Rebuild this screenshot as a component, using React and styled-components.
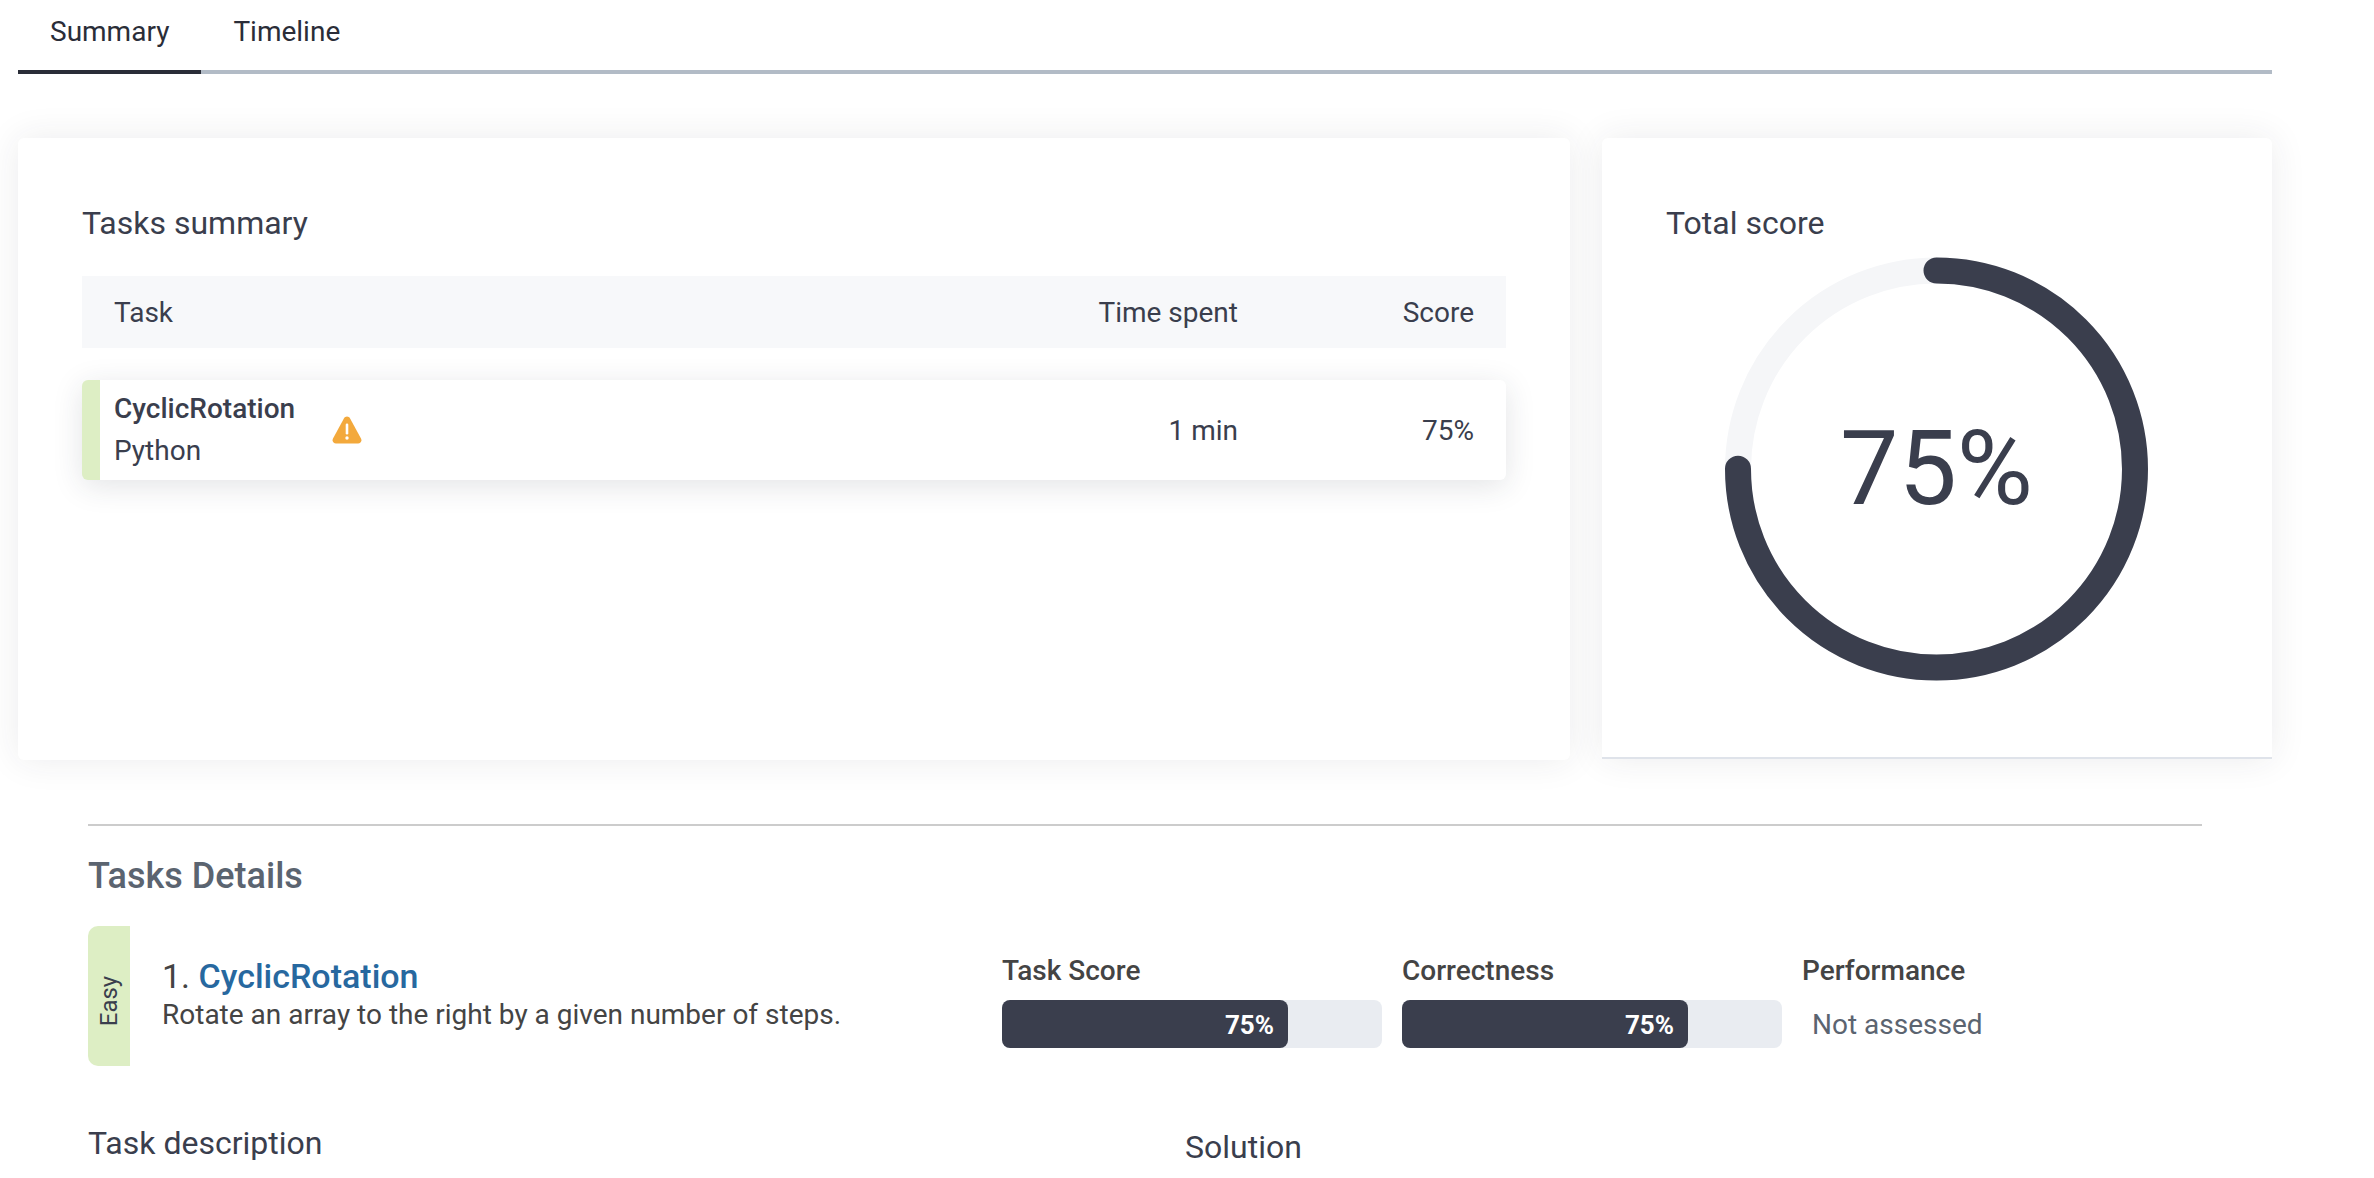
import React, { useState } from 'react';
import styled, { createGlobalStyle } from 'styled-components';

const GlobalStyle = createGlobalStyle`
  html, body {
    margin: 0;
    background: #ffffff;
    overflow: hidden;
  }
  body {
    font-family: Roboto, "Liberation Sans", sans-serif;
    color: #3a3e4d;
  }
`;

const tabs = ['Summary', 'Timeline'];

const bars = [
  { label: 'Task Score', value: 75 },
  { label: 'Correctness', value: 75 },
];

function WarningIcon() {
  return (
    <WarningSvg viewBox="0 0 30 28" aria-hidden="true">
      <path
        d="M15 .5c1.3 0 2.4.7 3.1 1.9l10.9 20.2c1.2 2.3-.4 4.9-3 4.9H4c-2.6 0-4.2-2.6-3-4.9L11.9 2.4C12.6 1.2 13.7.5 15 .5z"
        fill="#f3a93c"
      />
      <rect x="13.7" y="7.5" width="2.6" height="11" rx="1.3" fill="#ffffff" />
      <circle cx="15" cy="22" r="1.7" fill="#ffffff" />
    </WarningSvg>
  );
}

function ScoreRing({ value }) {
  const radius = 198.5;
  const circumference = 2 * Math.PI * radius;
  return (
    <RingBox>
      <svg width="423" height="424" viewBox="0 0 423 424" aria-hidden="true">
        <circle cx="211.5" cy="212" r={radius} fill="none" stroke="#f5f6f8" strokeWidth="26" />
        <circle
          cx="211.5"
          cy="212"
          r={radius}
          fill="none"
          stroke="#3a3e4d"
          strokeWidth="26"
          strokeLinecap="round"
          strokeDasharray={`${(circumference * value) / 100} ${circumference}`}
          transform="rotate(-90 211.5 212)"
        />
      </svg>
      <RingLabel>{value}%</RingLabel>
    </RingBox>
  );
}

export default function App() {
  const [activeTab, setActiveTab] = useState(tabs[0]);

  return (
    <Page>
      <GlobalStyle />
      <TabBar>
        {tabs.map((tab) => (
          <Tab key={tab} $active={tab === activeTab} onClick={() => setActiveTab(tab)}>
            {tab}
          </Tab>
        ))}
      </TabBar>

      <Cards>
        <SummaryCard>
          <CardTitle>Tasks summary</CardTitle>
          <TableHead>
            <span>Task</span>
            <TimeCell>Time spent</TimeCell>
            <ScoreCell>Score</ScoreCell>
          </TableHead>
          <TableRow>
            <TaskCell>
              <TaskText>
                <TaskName>CyclicRotation</TaskName>
                <span>Python</span>
              </TaskText>
              <WarningIcon />
            </TaskCell>
            <TimeCell>1 min</TimeCell>
            <ScoreCell>75%</ScoreCell>
          </TableRow>
        </SummaryCard>
        <TotalCard>
          <CardTitle>Total score</CardTitle>
          <ScoreRing value={75} />
        </TotalCard>
      </Cards>

      <Details>
        <Divider />
        <DetailsTitle>Tasks Details</DetailsTitle>
        <TaskHeader>
          <Difficulty>
            <DifficultyLabel>Easy</DifficultyLabel>
          </Difficulty>
          <TaskIntro>
            <TaskHeading>
              1. <TaskLink>CyclicRotation</TaskLink>
            </TaskHeading>
            <TaskSummary>Rotate an array to the right by a given number of steps.</TaskSummary>
          </TaskIntro>
          <Metrics>
            {bars.map((bar) => (
              <Metric key={bar.label}>
                <MetricLabel>{bar.label}</MetricLabel>
                <BarTrack>
                  <BarFill style={{ width: `calc(${bar.value}% + 1px)` }}>{bar.value}%</BarFill>
                </BarTrack>
              </Metric>
            ))}
            <Metric>
              <MetricLabel>Performance</MetricLabel>
              <NotAssessed>Not assessed</NotAssessed>
            </Metric>
          </Metrics>
        </TaskHeader>
        <Columns>
          <SectionTitle>Task description</SectionTitle>
          <SolutionTitle>Solution</SolutionTitle>
        </Columns>
      </Details>
    </Page>
  );
}

const Page = styled.div`
  width: 2254px;
  margin-left: 18px;
`;

const TabBar = styled.div`
  display: flex;
  height: 74px;
  box-sizing: border-box;
  border-bottom: 4px solid #b2bbc6;
`;

const Tab = styled.div`
  height: 74px;
  box-sizing: border-box;
  padding: 12px 32px 0;
  font-size: 28px;
  line-height: 40px;
  color: #2a2d38;
  cursor: pointer;
  border-bottom: 4px solid ${(props) => (props.$active ? '#2a2d38' : 'transparent')};
`;

const Cards = styled.div`
  display: grid;
  grid-template-columns: 1552px 670px;
  column-gap: 32px;
  margin-top: 64px;
`;

const Card = styled.section`
  height: 622px;
  box-sizing: border-box;
  padding: 64px;
  background: #ffffff;
  border-radius: 6px;
  box-shadow: 0 0 36px rgba(40, 44, 60, 0.09);
`;

const SummaryCard = styled(Card)``;

const TotalCard = styled(Card)`
  position: relative;
  height: 621px;
  border-bottom: 2px solid #dfe3ea;
  border-radius: 6px 6px 0 0;
`;

const CardTitle = styled.h2`
  margin: 0;
  padding-top: 1px;
  font-size: 32px;
  font-weight: 400;
  line-height: 40px;
  color: #3a3e4d;
`;

const rowColumns = `
  display: grid;
  grid-template-columns: 1fr 300px 236px;
  align-items: center;
  box-sizing: border-box;
  font-size: 28px;
  color: #3a3e4d;
`;

const TableHead = styled.div`
  ${rowColumns}
  height: 72px;
  margin-top: 33px;
  padding: 1px 32px 0;
  background: #f7f8fa;
`;

const TableRow = styled.div`
  ${rowColumns}
  height: 100px;
  margin-top: 32px;
  padding: 0 32px 0 14px;
  background: #ffffff;
  border-left: 18px solid #ddeec4;
  border-radius: 6px;
  box-shadow: 0 6px 30px rgba(40, 44, 60, 0.13);
`;

const TimeCell = styled.span`
  text-align: right;
`;

const ScoreCell = styled.span`
  text-align: right;
`;

const TaskCell = styled.div`
  display: flex;
  align-items: center;
  gap: 37px;
`;

const TaskText = styled.div`
  display: flex;
  flex-direction: column;
  line-height: 42px;
`;

const TaskName = styled.span`
  font-weight: 500;
`;

const WarningSvg = styled.svg`
  width: 30px;
  height: 28px;
  flex: none;
`;

const RingBox = styled.div`
  position: absolute;
  left: 123px;
  top: 119px;
  width: 423px;
  height: 424px;
`;

const RingLabel = styled.div`
  position: absolute;
  inset: 0;
  display: flex;
  align-items: center;
  justify-content: center;
  padding-bottom: 2px;
  box-sizing: border-box;
  font-size: 104px;
  font-weight: 400;
  color: #3a3e4d;
`;

const Details = styled.div`
  margin: 0 70px;
  padding-top: 64px;
`;

const Divider = styled.div`
  height: 2px;
  background: #cccccc;
`;

const DetailsTitle = styled.h2`
  margin: 28px 0 0;
  font-size: 36px;
  font-weight: 500;
  line-height: 44px;
  color: #5b6470;
`;

const TaskHeader = styled.div`
  display: flex;
  align-items: stretch;
  height: 140px;
  margin-top: 28px;
`;

const Difficulty = styled.div`
  display: flex;
  align-items: center;
  justify-content: center;
  width: 42px;
  background: #ddeec4;
  border-radius: 10px 0 0 10px;
`;

const DifficultyLabel = styled.span`
  transform: translateY(5px) rotate(-90deg);
  transform-origin: center;
  font-size: 24px;
  color: #3a3e4d;
`;

const TaskIntro = styled.div`
  width: 840px;
  margin-left: 32px;
  padding-top: 29px;
`;

const TaskHeading = styled.div`
  font-size: 34px;
  line-height: 42px;
  color: #444444;
`;

const TaskLink = styled.a`
  font-weight: 500;
  color: #27689f;
`;

const TaskSummary = styled.div`
  margin-top: 1px;
  font-size: 28px;
  line-height: 34px;
  color: #444444;
`;

const Metrics = styled.div`
  display: flex;
  gap: 20px;
  padding-top: 28px;
`;

const Metric = styled.div`
  width: 380px;
`;

const MetricLabel = styled.div`
  font-size: 28px;
  font-weight: 500;
  line-height: 34px;
  color: #444444;
`;

const BarTrack = styled.div`
  height: 48px;
  margin-top: 12px;
  background: #e9ecf1;
  border-radius: 8px;
`;

const BarFill = styled.div`
  height: 100%;
  box-sizing: border-box;
  padding: 1px 14px 0 0;
  background: #3a3e4d;
  border-radius: 8px;
  color: #ffffff;
  font-size: 26px;
  font-weight: 700;
  line-height: 48px;
  text-align: right;
`;

const NotAssessed = styled.div`
  margin-top: 12px;
  padding: 1px 0 0 10px;
  font-size: 28px;
  line-height: 48px;
  color: #5b6470;
`;

const Columns = styled.div`
  display: flex;
  margin-top: 55px;
`;

const SectionTitle = styled.h3`
  margin: 0;
  width: 1097px;
  font-size: 32px;
  font-weight: 400;
  line-height: 44px;
  color: #3a3e4d;
`;

const SolutionTitle = styled(SectionTitle)`
  margin-top: 4px;
  width: auto;
`;
